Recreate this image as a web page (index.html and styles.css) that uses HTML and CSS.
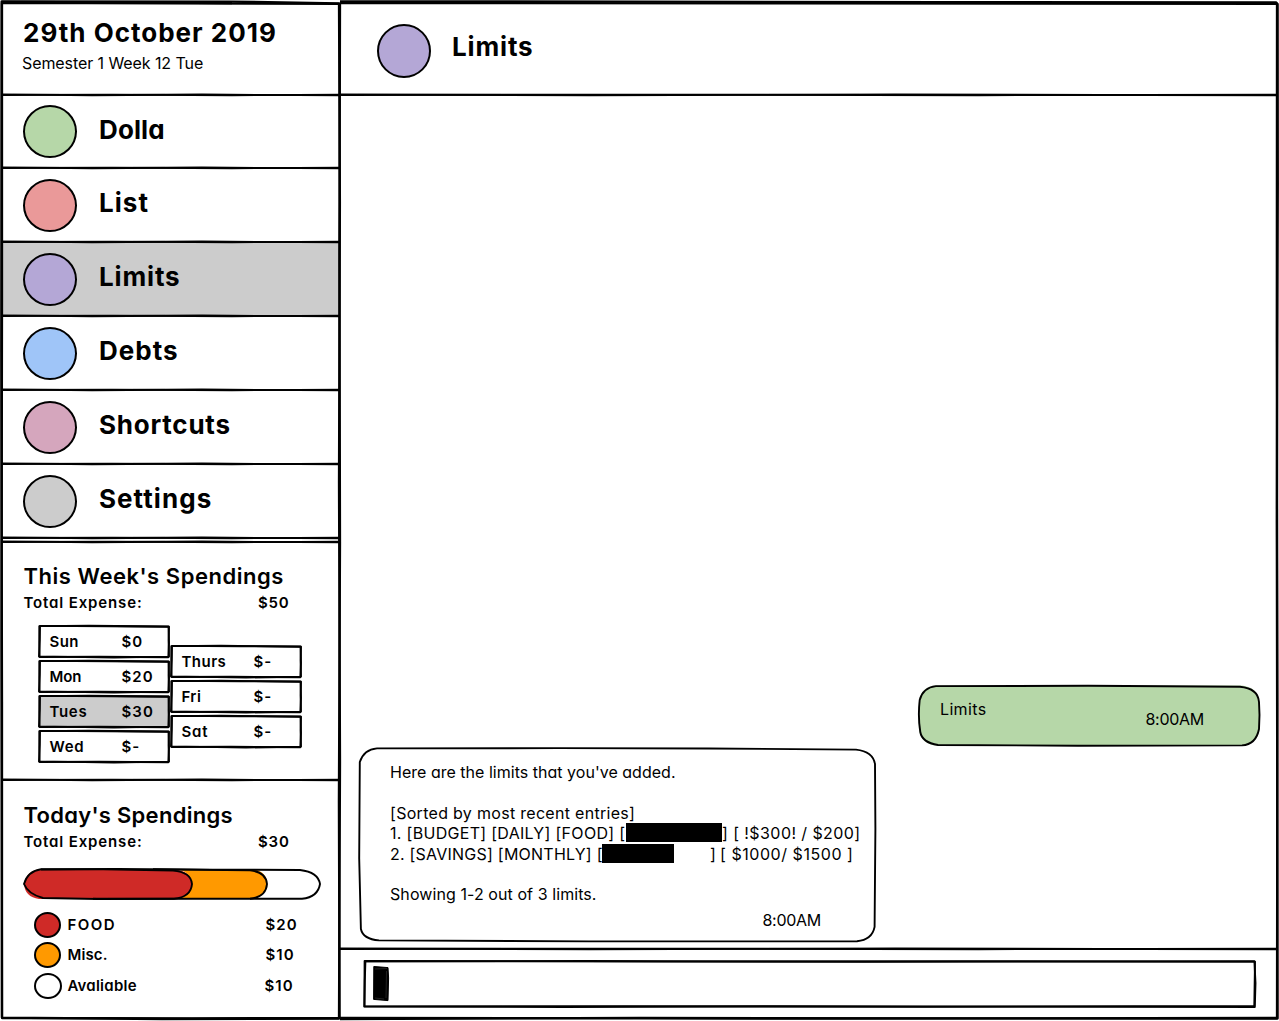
FILE: index.html
```
<!DOCTYPE html>
<html lang="en">
<head>
<meta charset="utf-8">
<title>Dolla - Limits</title>
<link rel="stylesheet" href="styles.css">
</head>
<body>
<svg class="defs" aria-hidden="true">
  <symbol id="rule" viewBox="0 0 338 4" preserveAspectRatio="none">
    <path d="M0 2 L110 1.6 L230 2.2 L338 1.7"/>
    <path d="M0 1.4 L90 2.3 L200 1.5 L338 2.4"/>
  </symbol>
  <symbol id="day" viewBox="0 0 130 33" preserveAspectRatio="none">
    <path d="M1 .9 L70 1.2 L130 1.7 L129.6 16 L130 31.6 L75 32.6 L0 31.4 L.8 15 Z"/>
    <path d="M.3 1.1 L50 .8 L129.5 1.5 L130 18 L129.3 32.2 L60 31.8 L.6 32 L.3 17 Z"/>
  </symbol>
</svg>

<div class="app">
  <aside class="sidebar">
    <header class="date">
      <h1>29th October 2019</h1>
      <p>Semester 1 Week 12 Tue</p>
      <svg class="rule"><use href="#rule"/></svg>
    </header>
    <nav>
      <a class="item dolla"><i class="dot"></i><span>Dolla</span><svg class="rule"><use href="#rule"/></svg></a>
      <a class="item list"><i class="dot"></i><span>List</span><svg class="rule"><use href="#rule"/></svg></a>
      <a class="item limits"><i class="dot"></i><span>Limits</span><svg class="rule"><use href="#rule"/></svg></a>
      <a class="item debts"><i class="dot"></i><span>Debts</span><svg class="rule"><use href="#rule"/></svg></a>
      <a class="item shortcuts"><i class="dot"></i><span>Shortcuts</span><svg class="rule"><use href="#rule"/></svg></a>
      <a class="item settings"><i class="dot"></i><span>Settings</span><svg class="rule"><use href="#rule"/></svg></a>
    </nav>
    <section class="week">
      <svg class="rule top"><use href="#rule"/></svg>
      <h2>This Week's Spendings</h2>
      <div class="total"><span>Total Expense:</span><b>$50</b></div>
      <div class="days">
        <div class="col">
          <div class="day sun"><svg class="frame"><use href="#day"/></svg><span>Sun</span><b>$0</b></div>
          <div class="day mon"><svg class="frame"><use href="#day"/></svg><span>Mon</span><b>$20</b></div>
          <div class="day tues"><svg class="frame"><use href="#day"/></svg><span>Tues</span><b>$30</b></div>
          <div class="day wed"><svg class="frame"><use href="#day"/></svg><span>Wed</span><b>$-</b></div>
        </div>
        <div class="col late">
          <div class="day thurs"><svg class="frame"><use href="#day"/></svg><span>Thurs</span><b>$-</b></div>
          <div class="day fri"><svg class="frame"><use href="#day"/></svg><span>Fri</span><b>$-</b></div>
          <div class="day sat"><svg class="frame"><use href="#day"/></svg><span>Sat</span><b>$-</b></div>
        </div>
      </div>
      <svg class="rule"><use href="#rule"/></svg>
    </section>
    <section class="today">
      <h2>Today's Spendings</h2>
      <div class="total"><span>Total Expense:</span><b>$30</b></div>
      <svg class="bar" viewBox="0 0 298 32">
        <path class="fill-food" d="M17 1 H150 Q169 3 169 16 Q169 29 151 31 H16 Q2 29 1 16 Q3 3 17 1Z"/>
        <path class="fill-misc" d="M154 1 H229 Q244 3 244 16 Q243 29 227 31 H152 Q168 29 169 16 Q168 4 154 1Z"/>
        <path d="M1 16 Q5 3 18 1.3 L95 .9 L190 1.6 L277 2 Q295 4 297 16 Q295 29 279 30.8 L170 30.8 L75 31 L20 30 Q5 26 1 16Z"/>
        <path d="M18 1.5 L80 1.4 L150 2.6 Q168 4 169 16 Q168 29 151 30.8 L70 30.7"/>
        <path d="M130 1.3 L227 2.4 Q243 4 244 16 Q243 29 227 30.8"/>
      </svg>
      <div class="legend">
        <div class="entry food"><i></i><span>FOOD</span><b>$20</b></div>
        <div class="entry misc"><i></i><span>Misc.</span><b>$10</b></div>
        <div class="entry avail"><i></i><span>Avaliable</span><b>$10</b></div>
      </div>
    </section>
    <svg class="frame outline" viewBox="0 0 338 1017" preserveAspectRatio="none">
      <path d="M0 .8 L338 1.8 L337.4 260 L338 540 L336.9 800 L337.6 1016 L190 1016.4 L0 1016 L-.5 640 L0 300 Z"/>
      <path d="M-.4 -.6 L230 -.4 L337 1.4 L337.9 200 L337 480 L338 760 L337 1016.5 L160 1017 L0 1015.6 L0 700 L-.7 350 Z"/>
      <path d="M0 0 L120 .4 L230 1.2"/>
    </svg>
  </aside>

  <main class="chat">
    <header class="title">
      <i class="dot"></i><span>Limits</span>
      <svg class="rule"><use href="#rule"/></svg>
    </header>
    <div class="messages">
      <div class="bubble sent">
        <svg class="frame" viewBox="0 0 342 61" preserveAspectRatio="none">
          <path class="fill-sent" d="M18 .6 H324 Q341 3 341.5 18 V43 Q341 58 324 60.5 H18 Q2 59 .8 43 V18 Q2 2 18 .6Z"/>
          <path d="M18 1.1 L170 .8 L322 1.8 Q340 3.5 341 17 L341.5 30 L341 44 Q338 59.5 324 60.4 L160 60.7 L20 60 Q4 57.5 2.3 47 Q-.2 32 1.7 15 Q5 2.5 18 1.1Z"/>
        </svg>
        <span class="body">Limits</span><time>8:00AM</time>
      </div>
      <div class="bubble reply">
        <svg class="frame" viewBox="0 0 516 193" preserveAspectRatio="none">
          <path d="M18 .4 L200 .1 L350 .5 L497 1.6 Q514 3.5 516 16 L516.4 80 L515.6 178 Q513 191 498 192.3 L230 192.4 L20 191.4 Q4 190 1.9 180 L.2 110 L.8 14 Q5 1.4 18 .4Z"/>
        </svg>
        <p class="intro">Here are the limits that you've added.</p>
        <p class="gap"></p>
        <p class="sorted">[Sorted by most recent entries]</p>
        <p class="row"><span class="one-a">1. [BUDGET] [DAILY] [FOOD] [</span><i class="block wide"></i><span class="one-b">] [ !$300! / $200]</span></p>
        <p class="row"><span class="two-a">2. [SAVINGS] [MONTHLY] [</span><i class="block"></i><span class="two-b">]</span><span class="two-c">[ $1000/ $1500 ]</span></p>
        <p class="gap"></p>
        <p class="showing">Showing 1-2 out of 3 limits.</p>
        <time>8:00AM</time>
      </div>
    </div>
    <footer class="composer">
      <svg class="rule top"><use href="#rule"/></svg>
      <div class="input">
        <svg class="frame" viewBox="0 0 891 46" preserveAspectRatio="none">
          <path d="M.6 0 L300 .6 L600 .2 L891 .6 L890.3 45 L560 45.7 L260 45.2 L.4 45.4 Z"/>
          <path d="M1.4 .4 L220 0 L500 .8 L890.4 .3 L891.5 22 L890.8 46 L400 45.3 L200 46 L.4 45.5 L.8 20 Z"/>
        </svg>
        <svg class="cursor" viewBox="0 0 16 35"><path d="M.8 .5 L15 1.6 L15.6 12 L15 34.6 L.6 33.4 Z"/><path class="glint" d="M2 3 L14 2.5 M13.5 5 L13 32 M2 32 L11 33"/></svg>
      </div>
    </footer>
    <svg class="frame outline" viewBox="0 0 938 1016" preserveAspectRatio="none">
      <path d="M0 1 L450 1.4 L937 1.8 L936.8 340 L937.4 700 L937 1015 L500 1015.6 L0 1015"/>
      <path d="M0 -.6 L300 -.4 L600 .2 L936 .4 L937.6 2 L937.8 180 L936.8 520 L937.6 1015.6 L300 1014.9 L0 1016"/>
    </svg>
  </main>
</div>
</body>
</html>
```
FILE: styles.css
```
* { box-sizing: border-box; margin: 0; padding: 0; }

body {
  width: 1279px;
  height: 1021px;
  overflow: hidden;
  background: #fff;
  color: #000;
  font: 400 16px/20px Inter, "Liberation Sans", sans-serif;
  font-feature-settings: "cv11";
}

i { font-style: normal; }
b, h1, h2 { font-weight: 600; }
span, b, time, p, h1, h2 { white-space: pre; }

svg { display: block; overflow: visible; fill: none; stroke: #000; stroke-width: 1.9; stroke-linejoin: round; }
.defs { position: absolute; width: 0; height: 0; }
symbol { overflow: visible; }
.frame { position: absolute; inset: 0; width: 100%; height: 100%; }
.rule { position: absolute; z-index: 1; left: 0; bottom: -2px; width: 100%; height: 4px; }
.rule.top { top: -2px; bottom: auto; }

.app {
  display: grid;
  grid-template-columns: 338px 938px;
  height: 1021px;
  padding: 2px 1px 2px 2px;
}
.sidebar, .chat { position: relative; display: flex; flex-direction: column; height: 1017px; }
.sidebar > *, .chat > * { flex: none; }
.outline { pointer-events: none; stroke-width: 2.3; }

/* sidebar heading */
.date { position: relative; height: 93px; padding: 16px 0 0 21px; }
.date h1 { font-size: 26px; font-weight: 700; line-height: 30px; letter-spacing: 1px; }
.date p { margin: 5px 0 0 -1px; letter-spacing: -.08px; }

/* navigation */
.item { position: relative; display: flex; height: 74px; padding-left: 21px; }
.item.dolla { height: 73px; }
.dot { width: 54px; height: 53px; border: 2px solid #000; border-radius: 50%; }
.item .dot { margin-top: 11px; }
.item.dolla .dot { margin-top: 10px; }
.item span, .title span { font-size: 26px; font-weight: 700; line-height: 28px; }
.item span { margin: 21px 0 0 22px; }
.dolla .dot { background: #b6d7a8; }
.list .dot { background: #ea9999; }
.limits .dot, .title .dot { background: #b4a7d6; }
.debts .dot { background: #9fc5f8; }
.shortcuts .dot { background: #d5a6bd; }
.settings .dot { background: #ccc; }
.item.limits { background: #ccc; }
.dolla span { letter-spacing: .1px; }
.list span { letter-spacing: 1.06px; }
.limits span, .title span { letter-spacing: .85px; }
.debts span { letter-spacing: 1px; }
.shortcuts span { letter-spacing: .76px; }
.settings span { letter-spacing: 1.05px; }

/* spendings */
.week, .today { position: relative; padding-left: 22px; font-size: 15px; font-weight: 600; }
.week { height: 238px; margin-top: 4px; padding-top: 20px; }
.today { height: 237px; padding-top: 21px; }
h2 { margin-left: -.5px; font-size: 22px; line-height: 28px; }
.week h2 { letter-spacing: .53px; }
.today h2 { letter-spacing: .28px; }
.total { display: grid; grid-template-columns: 234.5px 1fr; margin: 2.5px 0 0 -.6px; letter-spacing: .87px; }

.days { display: flex; gap: 2px; margin: 12.5px 0 0 15px; }
.col { display: flex; flex-direction: column; gap: 2px; }
.col.late { padding-top: 20px; }
.day { position: relative; display: grid; grid-template-columns: 72px 1fr; width: 130px; height: 33px; padding: 6.5px 0 0 10.4px; letter-spacing: .5px; }
.day > span, .day > b { position: relative; }
.day b { letter-spacing: 1.1px; }
.tues { background: #ccc; }
.tues span, .wed span { letter-spacing: .75px; }
.mon span { letter-spacing: -.1px; }
.sat span { letter-spacing: .9px; }

.bar { width: 298px; height: 32px; margin: 16px 0 0 -1.4px; }
.fill-food { fill: #cf2a27; stroke: none; }
.fill-misc { fill: #f90; stroke: none; }
.fill-sent { fill: #b6d7a8; stroke: none; }

.legend { display: grid; gap: 4px; margin: 12.5px 0 0 10px; }
.entry { display: grid; grid-template-columns: 33.4px 198px 1fr; height: 26px; line-height: 25px; letter-spacing: 1.1px; }
.entry i { width: 27px; height: 26px; border: 2px solid #000; border-radius: 50%; }
.food i { background: #cf2a27; }
.misc i { background: #f90; }
.food span { letter-spacing: 1.5px; }
.misc span { letter-spacing: .15px; }
.avail { padding-top: 1px; grid-template-columns: 33.4px 197px 1fr; }
.avail span { letter-spacing: .25px; }
.avail i { width: 28px; }

/* chat */
.title { position: relative; display: flex; height: 93px; padding: 22px 0 0 37px; }
.title .dot { height: 54px; }
.title span { margin: 9px 0 0 21px; }
.messages { position: relative; display: flex; flex-direction: column; justify-content: flex-end; height: 854px; padding: 0 18px 7px 19px; }
.bubble { position: relative; }
.bubble > :not(.frame) { position: relative; }
.bubble time { letter-spacing: -.3px; }
.sent { align-self: flex-end; display: flex; width: 342px; height: 61px; margin-bottom: 2px; padding: 14px 0 0 22px; }
.sent .body { width: 205.5px; letter-spacing: .35px; }
.sent time { padding-top: 10px; }
.reply { width: 516px; height: 194px; padding: 14px 0 0 31px; line-height: 20.4px; }
.reply p { height: 20.4px; display: flex; }
.intro { letter-spacing: .02px; }
.sorted { letter-spacing: .3px; }
.one-a { width: 236px; letter-spacing: .3px; }
.one-b { letter-spacing: .42px; }
.two-a { width: 212px; letter-spacing: .23px; }
.two-b { width: 46px; padding-left: 36px; }
.two-c { letter-spacing: .55px; }
.showing { letter-spacing: .08px; }
.block { width: 72px; height: 19px; background: #000; }
.block.wide { width: 96px; }
.reply time { display: block; margin: 5px 0 0 372.5px; }

.composer { position: relative; height: 69px; padding: 12px 0 0 24px; }
.input { position: relative; width: 891px; height: 46px; padding: 5px 0 0 8.5px; }
.cursor { position: relative; width: 16px; height: 35px; }
.cursor path { fill: #000; stroke-width: 1; }
.cursor .glint { fill: none; stroke: #444; stroke-width: .5; }
```
